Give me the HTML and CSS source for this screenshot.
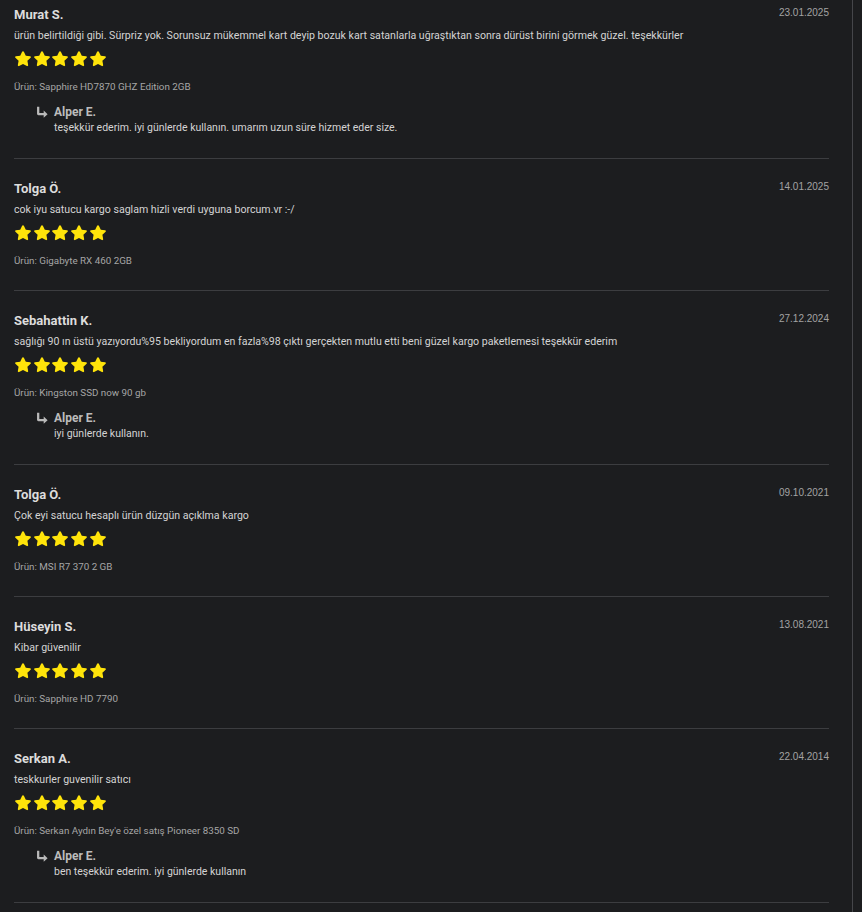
FILE: index.html
```html
<!DOCTYPE html>
<html lang="tr">
<head>
    <meta charset="UTF-8">
    <meta name="viewport" content="width=device-width, initial-scale=1.0">
    <title>Değerlendirmeler</title>
    <link rel="stylesheet" href="styles.css">
</head>
<body>
    <div class="page">
        <div class="reviews">

            <div class="review">
                <div class="review-head">
                    <span class="name">Murat S.</span>
                    <span class="date">23.01.2025</span>
                </div>
                <p class="comment">ürün belirtildiği gibi. Sürpriz yok. Sorunsuz mükemmel kart deyip bozuk kart satanlarla uğraştıktan sonra dürüst birini görmek güzel. teşekkürler</p>
                <div class="stars">
                    <svg viewBox="2 2 20 20"><use href="#star"/></svg>
                    <svg viewBox="2 2 20 20"><use href="#star"/></svg>
                    <svg viewBox="2 2 20 20"><use href="#star"/></svg>
                    <svg viewBox="2 2 20 20"><use href="#star"/></svg>
                    <svg viewBox="2 2 20 20"><use href="#star"/></svg>
                </div>
                <div class="product">Ürün: Sapphire HD7870 GHZ Edition 2GB</div>
                <div class="reply">
                    <svg class="reply-icon" viewBox="0 0 16 16"><use href="#arrow"/></svg>
                    <div>
                        <div class="reply-name">Alper E.</div>
                        <div class="reply-text">teşekkür ederim. iyi günlerde kullanın. umarım uzun süre hizmet eder size.</div>
                    </div>
                </div>
            </div>

            <div class="review">
                <div class="review-head">
                    <span class="name">Tolga Ö.</span>
                    <span class="date">14.01.2025</span>
                </div>
                <p class="comment">cok iyu satucu kargo saglam hizli verdi uyguna borcum.vr :-/</p>
                <div class="stars">
                    <svg viewBox="2 2 20 20"><use href="#star"/></svg>
                    <svg viewBox="2 2 20 20"><use href="#star"/></svg>
                    <svg viewBox="2 2 20 20"><use href="#star"/></svg>
                    <svg viewBox="2 2 20 20"><use href="#star"/></svg>
                    <svg viewBox="2 2 20 20"><use href="#star"/></svg>
                </div>
                <div class="product">Ürün: Gigabyte RX 460 2GB</div>
            </div>

            <div class="review">
                <div class="review-head">
                    <span class="name">Sebahattin K.</span>
                    <span class="date">27.12.2024</span>
                </div>
                <p class="comment">sağlığı 90 ın üstü yazıyordu%95 bekliyordum en fazla%98 çıktı gerçekten mutlu etti beni güzel kargo paketlemesi teşekkür ederim</p>
                <div class="stars">
                    <svg viewBox="2 2 20 20"><use href="#star"/></svg>
                    <svg viewBox="2 2 20 20"><use href="#star"/></svg>
                    <svg viewBox="2 2 20 20"><use href="#star"/></svg>
                    <svg viewBox="2 2 20 20"><use href="#star"/></svg>
                    <svg viewBox="2 2 20 20"><use href="#star"/></svg>
                </div>
                <div class="product">Ürün: Kingston SSD now 90 gb</div>
                <div class="reply">
                    <svg class="reply-icon" viewBox="0 0 16 16"><use href="#arrow"/></svg>
                    <div>
                        <div class="reply-name">Alper E.</div>
                        <div class="reply-text">iyi günlerde kullanın.</div>
                    </div>
                </div>
            </div>

            <div class="review">
                <div class="review-head">
                    <span class="name">Tolga Ö.</span>
                    <span class="date">09.10.2021</span>
                </div>
                <p class="comment">Çok eyi satucu hesaplı ürün düzgün açıklma kargo</p>
                <div class="stars">
                    <svg viewBox="2 2 20 20"><use href="#star"/></svg>
                    <svg viewBox="2 2 20 20"><use href="#star"/></svg>
                    <svg viewBox="2 2 20 20"><use href="#star"/></svg>
                    <svg viewBox="2 2 20 20"><use href="#star"/></svg>
                    <svg viewBox="2 2 20 20"><use href="#star"/></svg>
                </div>
                <div class="product">Ürün: MSI R7 370 2 GB</div>
            </div>

            <div class="review">
                <div class="review-head">
                    <span class="name">Hüseyin S.</span>
                    <span class="date">13.08.2021</span>
                </div>
                <p class="comment">Kibar güvenilir</p>
                <div class="stars">
                    <svg viewBox="2 2 20 20"><use href="#star"/></svg>
                    <svg viewBox="2 2 20 20"><use href="#star"/></svg>
                    <svg viewBox="2 2 20 20"><use href="#star"/></svg>
                    <svg viewBox="2 2 20 20"><use href="#star"/></svg>
                    <svg viewBox="2 2 20 20"><use href="#star"/></svg>
                </div>
                <div class="product">Ürün: Sapphire HD 7790</div>
            </div>

            <div class="review">
                <div class="review-head">
                    <span class="name">Serkan A.</span>
                    <span class="date">22.04.2014</span>
                </div>
                <p class="comment">teskkurler guvenilir satıcı</p>
                <div class="stars">
                    <svg viewBox="2 2 20 20"><use href="#star"/></svg>
                    <svg viewBox="2 2 20 20"><use href="#star"/></svg>
                    <svg viewBox="2 2 20 20"><use href="#star"/></svg>
                    <svg viewBox="2 2 20 20"><use href="#star"/></svg>
                    <svg viewBox="2 2 20 20"><use href="#star"/></svg>
                </div>
                <div class="product">Ürün: Serkan Aydın Bey'e özel satış Pioneer 8350 SD</div>
                <div class="reply">
                    <svg class="reply-icon" viewBox="0 0 16 16"><use href="#arrow"/></svg>
                    <div>
                        <div class="reply-name">Alper E.</div>
                        <div class="reply-text">ben teşekkür ederim. iyi günlerde kullanın</div>
                    </div>
                </div>
            </div>

        </div>
        <div class="side-line"></div>
    </div>

    <!-- ortak ikonlar -->
    <svg width="0" height="0" class="defs">
        <defs>
            <path id="star" d="M12 2.2c.5 0 .9.3 1.1.7l2.4 5 5.4.7c.9.1 1.3 1.2.6 1.9l-4 3.8 1 5.4c.2.9-.8 1.6-1.6 1.1L12 18.2l-4.9 2.6c-.8.5-1.8-.2-1.6-1.1l1-5.4-4-3.8c-.7-.7-.3-1.8.6-1.9l5.4-.7 2.4-5c.2-.4.6-.7 1.1-.7z"/>
            <path id="arrow" d="M2.5 1h2.8v7.6h5.4V5.4L15.5 10l-4.8 4.6v-3.2H4.3c-1 0-1.8-.8-1.8-1.8z"/>
        </defs>
    </svg>
</body>
</html>
```

FILE: styles.css
```css
body {
    margin: 0;
    background: #1c1d1f;
    font-family: Roboto, "Noto Sans", sans-serif;
    color: #d6d6d6;
}
.page {
    display: flex;
    min-height: 912px;
}
.reviews {
    flex: 1;
    padding: 0 23px 0 14px;
}
.side-line {
    width: 1px;
    background: #45464a;
    margin-right: 9px;
}
.review {
    padding: 21px 0 22px;
    border-bottom: 1px solid #3c3d40;
}
.review:first-child {
    padding-top: 6px;
}
.review-head {
    display: flex;
    justify-content: space-between;
    align-items: flex-start;
    height: 18px;
}
.name {
    font-size: 13px;
    font-weight: 700;
    line-height: 18px;
    color: #dcdcdc;
}
.date {
    font-size: 10px;
    line-height: 14px;
    color: #a3a3a3;
    font-family: "Liberation Sans", Arial, sans-serif;
}
.comment {
    margin: 4px 0 0;
    font-size: 10.6px;
    line-height: 16px;
    color: #d4d4d4;
}
.stars {
    display: flex;
    gap: 2.7px;
    margin-top: 7px;
    height: 16px;
    align-items: center;
    padding-left: 1px;
}
.stars svg {
    width: 16px;
    height: 16px;
    fill: #ffe40a;
}
.product {
    margin-top: 13px;
    font-size: 9.8px;
    line-height: 14px;
    color: #a6a6a6;
}
.reply {
    display: flex;
    gap: 6px;
    margin-top: 10px;
    padding-left: 21px;
}
.reply-icon {
    width: 13px;
    height: 13px;
    fill: #b9b9b9;
    margin-top: 2px;
}
.reply-name {
    font-size: 12px;
    font-weight: 700;
    line-height: 16px;
    color: #bcbcbc;
}
.reply-text {
    font-size: 10.5px;
    line-height: 16px;
    color: #d4d4d4;
}
.defs {
    position: absolute;
}
```
